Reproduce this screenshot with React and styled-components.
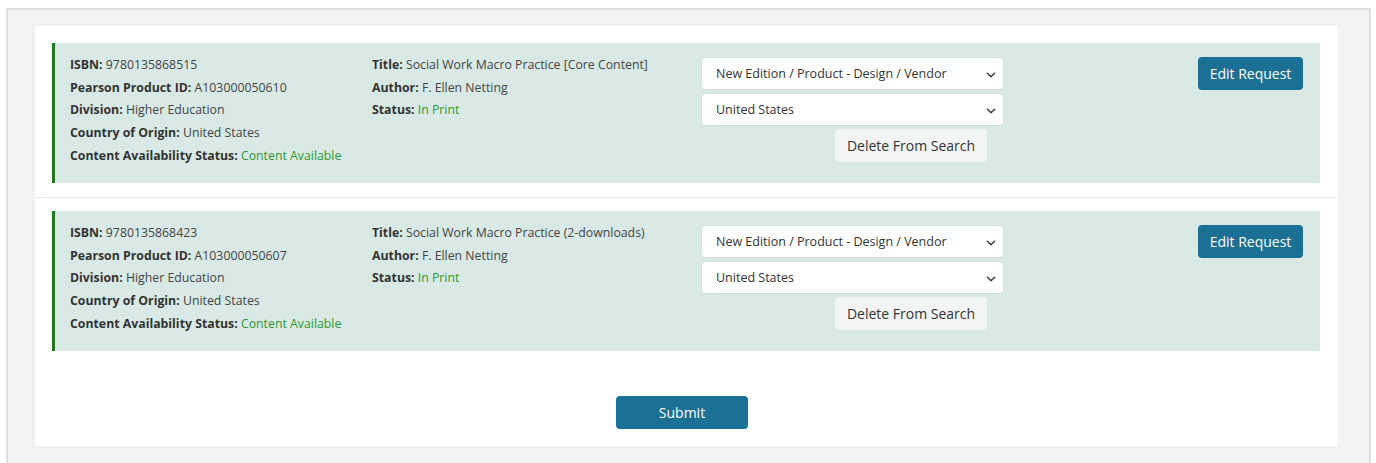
import React from "react";
import styled, { createGlobalStyle } from "styled-components";

const GlobalStyle = createGlobalStyle`
  html, body {
    margin: 0;
    padding: 0;
    background: #ffffff;
    font-family: "Open Sans", "Noto Sans", Arial, sans-serif;
    color: #333;
  }
  * { box-sizing: border-box; }
`;

const Page = styled.div`
  padding: 8px 0 0 6px;
  height: 463px;
  overflow: hidden;
`;

const Shell = styled.div`
  width: 1365px;
  background: #f2f2f2;
  border: 2px solid #dedede;
  padding: 16px 31px 24px 27px;
`;

const Panel = styled.div`
  background: #ffffff;
  padding: 17px 0 17px 0;
`;

const Row = styled.div`
  padding: ${(p) => (p.$first ? "0" : "13px")} 18px 14px 17px;
  border-bottom: ${(p) => (p.$last ? "none" : "1px solid #e4eeeb")};
`;

const Card = styled.div`
  display: flex;
  align-items: flex-start;
  height: 140px;
  background: #d9eae6;
  border-left: 3px solid #1f7a1f;
  padding: 11px 17px 0 15px;
`;

const InfoColumn = styled.div`
  width: ${(p) => p.$width}px;
  flex: none;
  font-size: 12.3px;
  line-height: 22.7px;
  color: #444;
`;

const Line = styled.div`
  white-space: nowrap;
`;

const Label = styled.span`
  font-weight: 700;
  color: #333;
`;

const Value = styled.span`
  color: ${(p) => (p.$ok ? "#2f9a2f" : "#444")};
`;

const Controls = styled.div`
  width: 303px;
  flex: none;
  display: flex;
  flex-direction: column;
  gap: 3px;
  padding-top: 3px;
`;

const SelectWrap = styled.div`
  position: relative;
  height: 33px;
`;

const Select = styled.select`
  appearance: none;
  -webkit-appearance: none;
  width: 100%;
  height: 100%;
  border: 1px solid #d6dcdb;
  border-radius: 4px;
  background: #ffffff;
  padding: 0 30px 0 14px;
  font-family: "Open Sans", "Noto Sans", Arial, sans-serif;
  font-size: 12.5px;
  color: #333;
`;

const Chevron = styled.svg`
  position: absolute;
  right: 8px;
  top: 50%;
  width: 10px;
  height: 10px;
  margin-top: -4px;
  pointer-events: none;
`;

const GhostButton = styled.button`
  align-self: flex-end;
  margin-right: 17px;
  width: 152px;
  height: 33px;
  border: none;
  border-radius: 4px;
  background: #f3f5f5;
  font-family: "Open Sans", "Noto Sans", Arial, sans-serif;
  font-size: 14px;
  color: #333;
`;

const PrimaryButton = styled.button`
  height: 33px;
  width: ${(p) => p.$width}px;
  border: none;
  border-radius: 4px;
  background: #1b7095;
  color: #ffffff;
  font-family: "Open Sans", "Noto Sans", Arial, sans-serif;
  font-size: 14px;
`;

const EditSlot = styled.div`
  margin-left: auto;
  padding-top: 3px;
`;

const Footer = styled.div`
  display: flex;
  justify-content: center;
  padding: 31px 9px 0 0;
`;

function Dropdown({ value, options }) {
  return (
    <SelectWrap>
      <Select defaultValue={value}>
        {options.map((o) => (
          <option key={o}>{o}</option>
        ))}
      </Select>
      <Chevron viewBox="0 0 10 10">
        <path d="M1.5 3.2 L5 6.7 L8.5 3.2" fill="none" stroke="#444" strokeWidth="1.6" strokeLinecap="round" strokeLinejoin="round" />
      </Chevron>
    </SelectWrap>
  );
}

const requests = [
  {
    isbn: "9780135868515",
    productId: "A103000050610",
    title: "Social Work Macro Practice [Core Content]",
  },
  {
    isbn: "9780135868423",
    productId: "A103000050607",
    title: "Social Work Macro Practice (2-downloads)",
  },
];

const requestTypes = ["New Edition / Product - Design / Vendor"];
const countries = ["United States"];

export default function App() {
  return (
    <>
      <GlobalStyle />
      <Page>
        <Shell>
          <Panel>
            {requests.map((r, i) => (
              <Row key={r.isbn} $first={i === 0} $last={i === requests.length - 1}>
                <Card>
                  <InfoColumn $width={302}>
                    <Line><Label>ISBN:</Label> <Value>{r.isbn}</Value></Line>
                    <Line><Label>Pearson Product ID:</Label> <Value>{r.productId}</Value></Line>
                    <Line><Label>Division:</Label> <Value>Higher Education</Value></Line>
                    <Line><Label>Country of Origin:</Label> <Value>United States</Value></Line>
                    <Line><Label>Content Availability Status:</Label> <Value $ok>Content Available</Value></Line>
                  </InfoColumn>
                  <InfoColumn $width={329}>
                    <Line><Label>Title:</Label> <Value>{r.title}</Value></Line>
                    <Line><Label>Author:</Label> <Value>F. Ellen Netting</Value></Line>
                    <Line><Label>Status:</Label> <Value $ok>In Print</Value></Line>
                  </InfoColumn>
                  <Controls>
                    <Dropdown value={requestTypes[0]} options={requestTypes} />
                    <Dropdown value={countries[0]} options={countries} />
                    <GhostButton>Delete From Search</GhostButton>
                  </Controls>
                  <EditSlot>
                    <PrimaryButton $width={105}>Edit Request</PrimaryButton>
                  </EditSlot>
                </Card>
              </Row>
            ))}
            <Footer>
              <PrimaryButton $width={132}>Submit</PrimaryButton>
            </Footer>
          </Panel>
        </Shell>
      </Page>
    </>
  );
}
